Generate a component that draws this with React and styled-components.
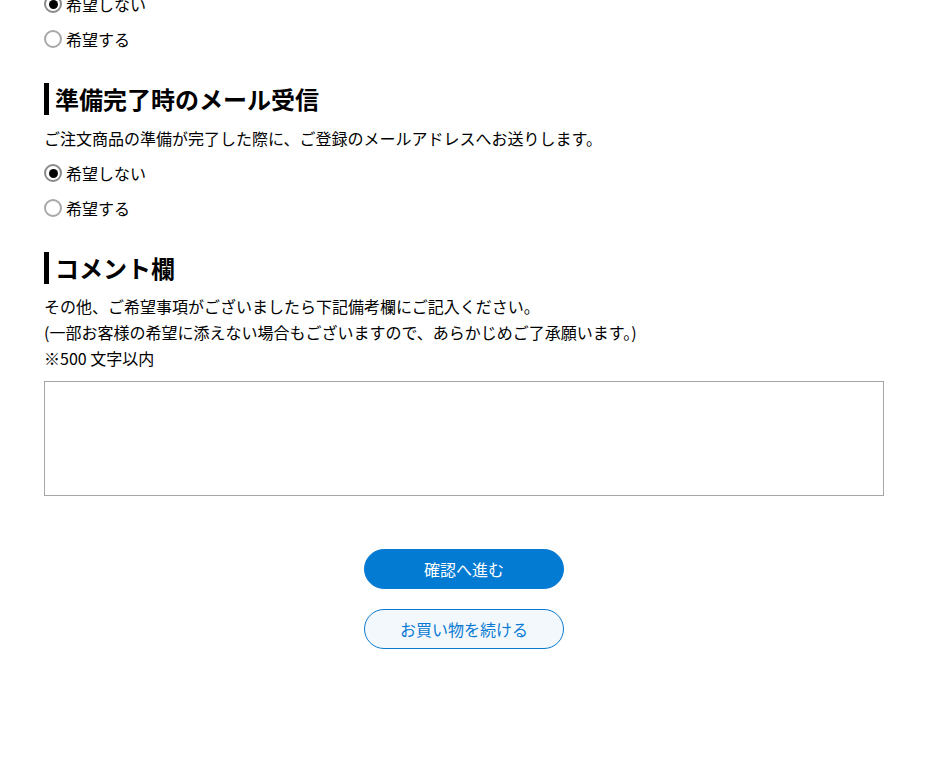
import React from 'react';
import styled, { createGlobalStyle } from 'styled-components';

const GlobalStyle = createGlobalStyle`
    html, body {
        margin: 0;
        padding: 0;
        background: #fff;
    }
    body {
        font-family: "Noto Sans CJK JP", "Noto Sans", sans-serif;
        color: #000;
        font-size: 16px;
    }
`;

const Page = styled.div`
    width: 840px;
    padding: 0 46px 0 44px;
    margin-top: -13.5px;
    padding-bottom: 120px;
`;

const Section = styled.section`
    margin-top: ${(p) => (p.$first ? '0' : '26.5px')};
`;

const Heading = styled.h2`
    margin: 0;
    height: 32px;
    line-height: 32px;
    border-left: 5px solid #000;
    padding-left: 6px;
    font-size: 24px;
    font-weight: 700;
    letter-spacing: 0;
`;

const Desc = styled.p`
    margin: ${(p) => p.$mt || '10px'} 0 0;
    line-height: 26px;
    font-size: 16px;
`;

const RadioGroup = styled.div`
    margin-top: ${(p) => (p.$flush ? '0' : '4.5px')};
    display: flex;
    flex-direction: column;
`;

const RadioLabel = styled.label`
    height: 35px;
    display: flex;
    align-items: center;
    gap: 4px;
    font-size: 16px;
    cursor: pointer;
`;

const Radio = styled.input.attrs({ type: 'radio' })`
    appearance: none;
    margin: 0;
    width: 18px;
    height: 18px;
    border-radius: 50%;
    border: 2px solid ${(p) => (p.defaultChecked ? '#8a8a8a' : '#a8a8a8')};
    box-sizing: border-box;
    display: grid;
    place-items: center;
    background: #fff;

    &:checked::after {
        content: '';
        width: 9px;
        height: 9px;
        border-radius: 50%;
        background: #000;
    }
`;

const Comment = styled.textarea`
    display: block;
    margin-top: 10px;
    width: 100%;
    height: 115px;
    box-sizing: border-box;
    border: 1px solid #a6a6a6;
    resize: none;
    font-family: inherit;
    font-size: 16px;
    padding: 8px;
    outline: none;
`;

const Actions = styled.div`
    margin-top: 53px;
    display: flex;
    flex-direction: column;
    align-items: center;
    gap: 20px;
`;

const Button = styled.button`
    width: 200px;
    height: 40px;
    border-radius: 20px;
    font-family: inherit;
    font-size: 16px;
    line-height: 1;
    cursor: pointer;
    box-sizing: border-box;
    border: 1px solid #0a7bd3;
    background: ${(p) => (p.$secondary ? '#f3f8fd' : '#037bd3')};
    color: ${(p) => (p.$secondary ? '#0a7bd3' : '#fff')};
`;

function RadioSet({ name, flush }) {
    return (
        <RadioGroup $flush={flush}>
            <RadioLabel>
                <Radio name={name} defaultChecked />
                希望しない
            </RadioLabel>
            <RadioLabel>
                <Radio name={name} />
                希望する
            </RadioLabel>
        </RadioGroup>
    );
}

export default function App() {
    return (
        <>
            <GlobalStyle />
            <Page>
                <Section $first>
                    <RadioSet name="prev" flush />
                </Section>

                <Section>
                    <Heading>準備完了時のメール受信</Heading>
                    <Desc>ご注文商品の準備が完了した際に、ご登録のメールアドレスへお送りします。</Desc>
                    <RadioSet name="ready-mail" />
                </Section>

                <Section>
                    <Heading>コメント欄</Heading>
                    <Desc $mt="9px">
                        その他、ご希望事項がございましたら下記備考欄にご記入ください。
                        <br />
                        (一部お客様の希望に添えない場合もございますので、あらかじめご了承願います。)
                        <br />
                        ※500 文字以内
                    </Desc>
                    <Comment maxLength={500} />
                </Section>

                <Actions>
                    <Button>確認へ進む</Button>
                    <Button $secondary>お買い物を続ける</Button>
                </Actions>
            </Page>
        </>
    );
}
